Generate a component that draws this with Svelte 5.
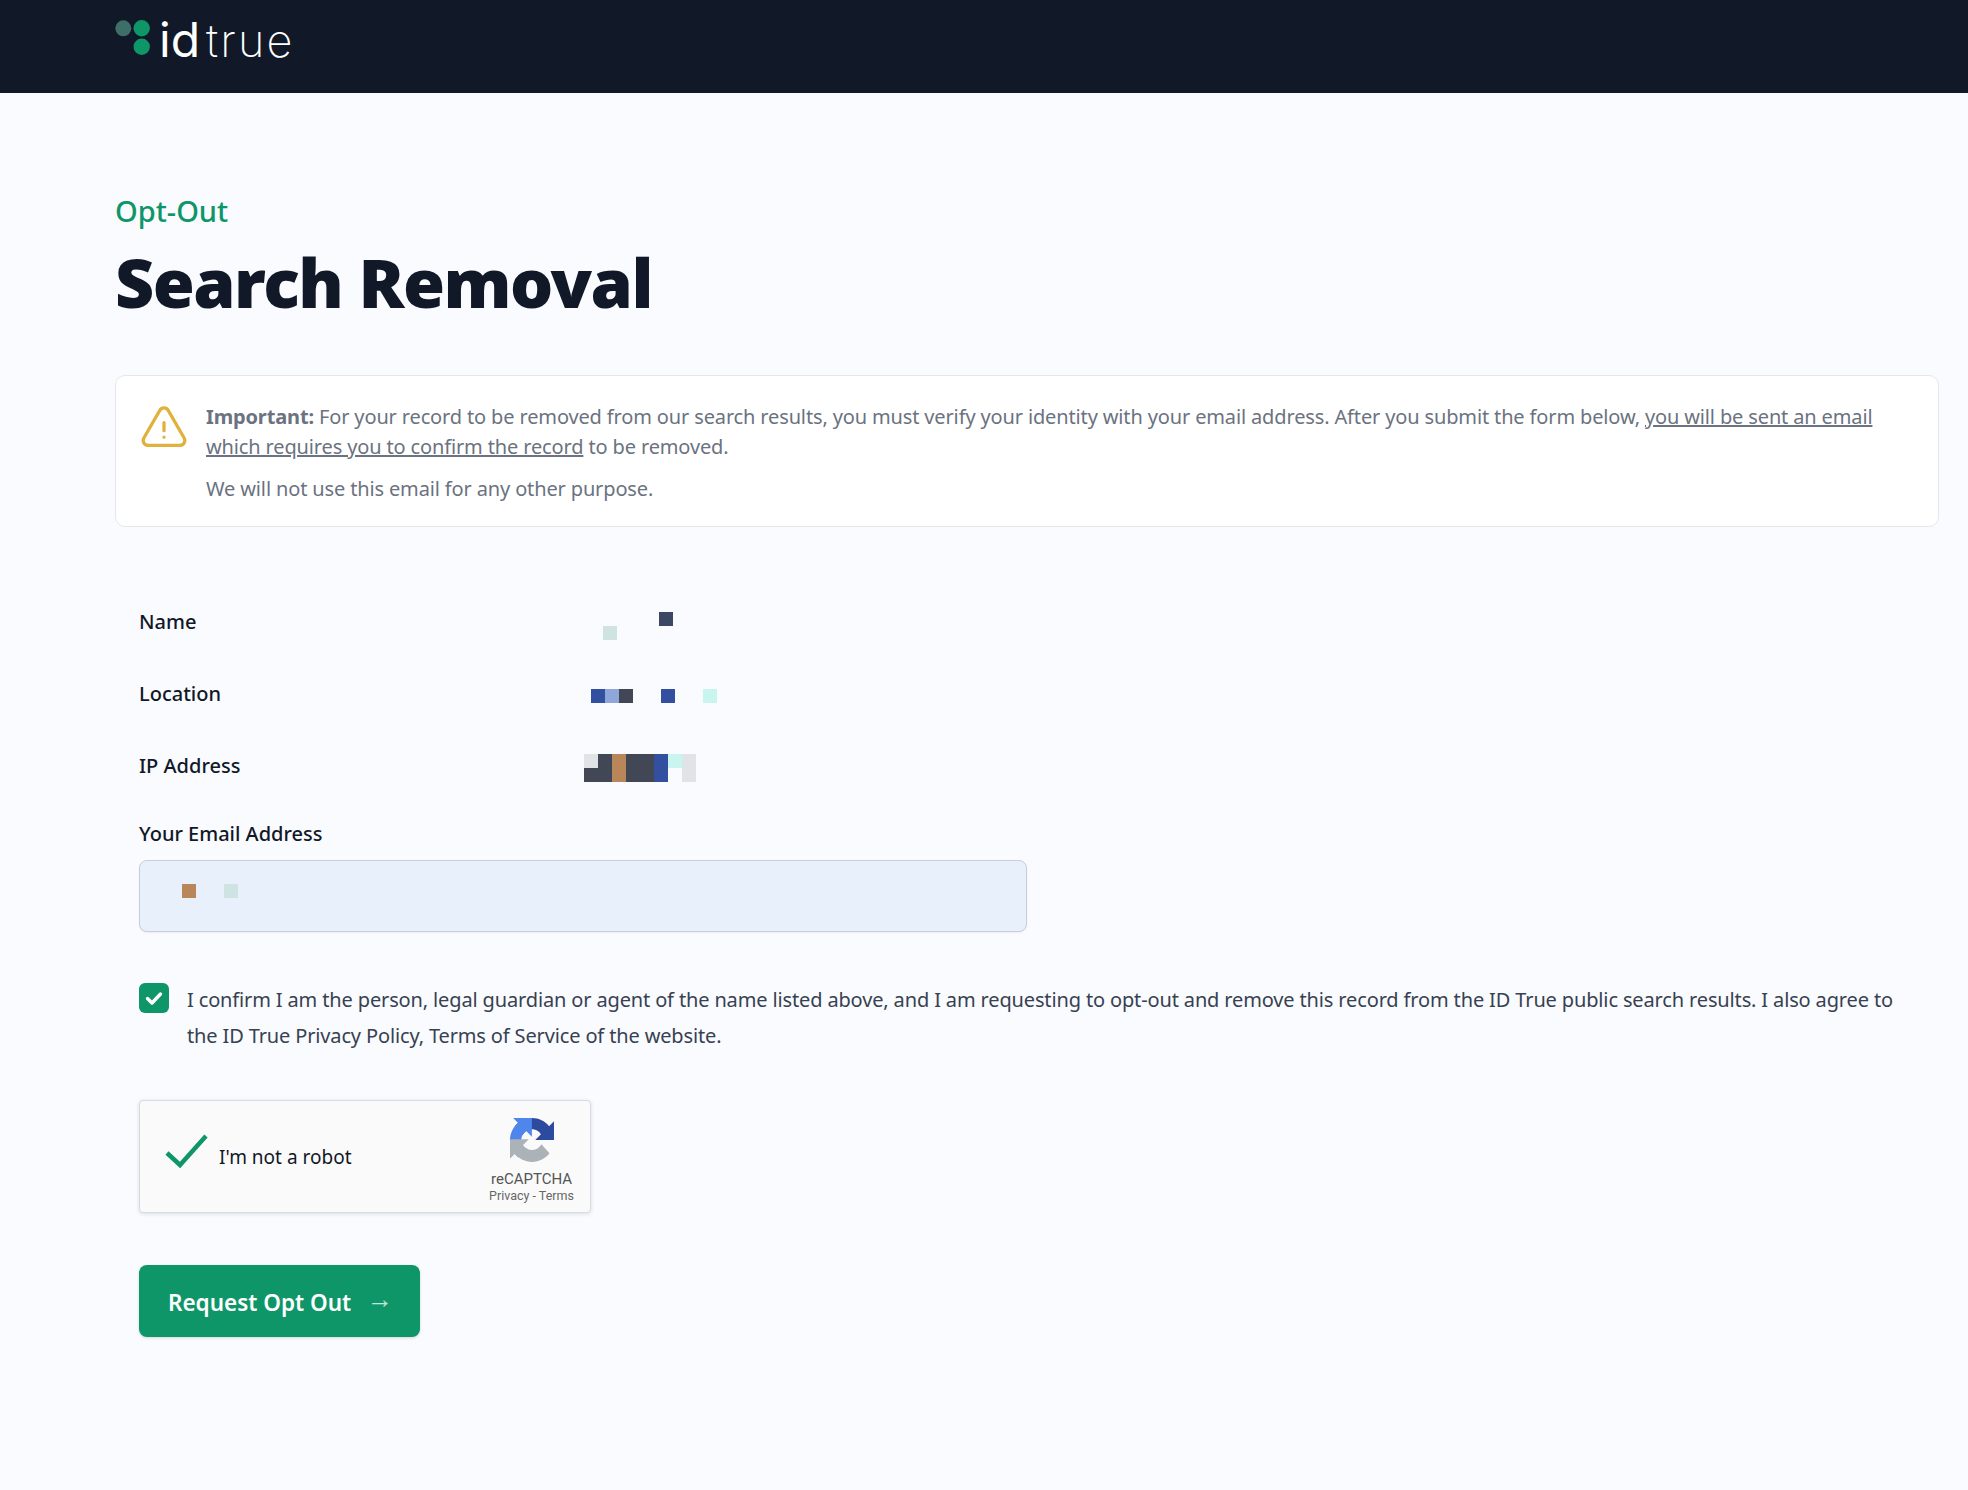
<script>
  const blue = '#32509f', dark = '#414754', orange = '#b88658', teal = '#c8f5ef', pale = '#cfe3e2', grey = '#e0e4e6'

  // redaction blocks: x, y, w, h, colour
  const fields = [
    { label: 'Name', cells: [[75, 5, 14, 14, '#3b4763'], [19, 19, 14, 14, pale]] },
    { label: 'Location', cells: [[7, 10, 14, 14, blue], [21, 10, 14, 14, '#8ea6d8'], [35, 10, 14, 14, dark], [77, 10, 14, 14, blue], [119, 10, 14, 14, teal]] },
    { label: 'IP Address', cells: [
      [0, 3, 14, 14, grey], [0, 17, 14, 14, dark], [14, 3, 14, 28, dark], [28, 3, 14, 28, orange],
      [42, 3, 28, 28, dark], [70, 3, 14, 28, blue], [84, 3, 14, 14, teal], [98, 3, 14, 28, grey]
    ] }
  ]
</script>

<header class="topbar">
  <a class="logo" href="/">
    <svg width="40" height="40" viewBox="0 0 40 40">
      <circle cx="8.3" cy="9.3" r="8" fill="#3d6e68" />
      <circle cx="26.7" cy="9.3" r="8.2" fill="#0e9669" />
      <circle cx="26.7" cy="27.7" r="8.2" fill="#0e9669" />
    </svg>
    <span class="logo-text"><b>id</b>true</span>
  </a>
</header>

<main class="page">
  <p class="eyebrow">Opt-Out</p>
  <h1>Search Removal</h1>

  <section class="notice">
    <svg class="warn" width="52" height="52" viewBox="0 0 24 24" fill="none" stroke="#e0b23c" stroke-width="1.5" stroke-linecap="round" stroke-linejoin="round">
      <path d="M12 9v3.75m-9.303 3.376c-.866 1.5.217 3.374 1.948 3.374h14.71c1.73 0 2.813-1.874 1.948-3.374L13.949 3.378c-.866-1.5-3.032-1.5-3.898 0L2.697 16.126zM12 15.75h.007v.008H12v-.008z" />
    </svg>
    <div class="notice-body">
      <p><strong>Important:</strong> For your record to be removed from our search results, you must verify your identity with your email address. After you submit the form below, <u>you will be sent an email which requires you to confirm the record</u> to be removed.</p>
      <p>We will not use this email for any other purpose.</p>
    </div>
  </section>

  <form class="form" on:submit|preventDefault>
    <div class="rows">
      {#each fields as f}
        <div class="field-row">
          <span class="label">{f.label}</span>
          <svg class="redacted" width="140" height="36">
            {#each f.cells as c}
              <rect x={c[0]} y={c[1]} width={c[2]} height={c[3]} fill={c[4]} />
            {/each}
          </svg>
        </div>
      {/each}
    </div>

    <label class="label email-label" for="email">Your Email Address</label>
    <div class="email-input" id="email">
      <svg class="redacted" width="56" height="14">
        <rect x="0" y="0" width="14" height="14" fill={orange} />
        <rect x="42" y="0" width="14" height="14" fill={pale} />
      </svg>
    </div>

    <div class="confirm">
      <span class="checkbox">
        <svg width="20" height="20" viewBox="0 0 20 20" fill="none" stroke="#fff" stroke-width="3.4" stroke-linecap="round" stroke-linejoin="round">
          <path d="M3.5 10.5l4.5 4.5 8.5-9" />
        </svg>
      </span>
      <p>I confirm I am the person, legal guardian or agent of the name listed above, and I am requesting to opt-out and remove this record from the ID True public search results. I also agree to the ID True Privacy Policy, Terms of Service of the website.</p>
    </div>

    <div class="captcha">
      <svg class="tick" width="44" height="36" viewBox="0 0 44 36" fill="none" stroke="#0e9669" stroke-width="4.5">
        <path d="M2 20l13 12L41 3" />
      </svg>
      <span class="robot">I'm not a robot</span>
      <div class="brand">
        <svg width="44" height="44" viewBox="0 0 64 64">
          <path d="M64 31.955l-.033-1.37V4.687l-7.16 7.16C50.948 4.674 42.033.093 32.05.093c-10.4 0-19.622 4.96-25.458 12.64l11.736 11.86a15.55 15.55 0 0 1 4.754-5.334c2.05-1.6 4.952-2.906 8.968-2.906.485 0 .86.057 1.135.163 4.976.393 9.288 3.14 11.828 7.124l-8.307 8.307 26.295.008" fill="#2c4a9e" />
          <path d="M31.862.001l-1.37.033H4.593l7.16 7.16C4.58 13.054 0 21.97 0 31.953c0 10.4 4.96 19.622 12.64 25.458l11.86-11.736a15.55 15.55 0 0 1-5.334-4.754c-1.6-2.05-2.906-4.952-2.906-8.968 0-.485.057-.86.163-1.135.393-4.976 3.14-9.288 7.124-11.828l8.307 8.307.008-26.295" fill="#4f86ec" />
          <path d="M.001 31.955l.033 1.37v25.9l7.16-7.16c5.86 7.173 14.775 11.754 24.76 11.754 10.4 0 19.622-4.96 25.458-12.64L45.676 38.32a15.55 15.55 0 0 1-4.754 5.334c-2.05 1.6-4.952 2.906-8.968 2.906-.485 0-.86-.057-1.135-.163-4.976-.393-9.288-3.14-11.828-7.124l8.307-8.307-26.295-.008" fill="#abb2b8" />
        </svg>
        <span class="brand-name">reCAPTCHA</span>
        <span class="brand-links">Privacy - Terms</span>
      </div>
    </div>

    <button class="submit" type="submit">Request Opt Out <span class="arrow">→</span></button>
  </form>
</main>

<style>
  :global(body) {
    background: #f9fbfe;
    font-family: "Noto Sans", "Open Sans", sans-serif;
    color: #111827;
  }
  * {
    box-sizing: border-box;
  }
  p, h1 {
    margin: 0;
  }
  .topbar {
    height: 93px;
    background: #111827;
    padding: 19px 0 0 115px;
  }
  .logo {
    display: flex;
    gap: 4px;
    text-decoration: none;
    height: 40px;
  }
  .logo-text {
    font-family: "Inter", sans-serif;
    font-size: 45px;
    line-height: 42px;
    font-weight: 200;
    letter-spacing: 2.2px;
    color: #fff;
  }
  .logo-text b {
    font-size: 48px;
    font-weight: 400;
    letter-spacing: 0;
    margin-right: 6px;
  }
  .page {
    padding: 99px 29px 0 115px;
    height: 1397px;
  }
  .eyebrow {
    font-size: 29px;
    line-height: 37px;
    font-weight: 500;
    color: #0e9669;
  }
  h1 {
    font-size: 68px;
    line-height: 80px;
    font-weight: 900;
    margin-top: 13px;
    letter-spacing: -1.5px;
  }
  .notice {
    display: flex;
    margin-top: 53px;
    height: 152px;
    padding: 26px 40px 0 22px;
    gap: 16px;
    background: #fff;
    border: 1px solid #e5e7eb;
    border-radius: 10px;
    color: #6b7280;
    font-size: 20px;
    line-height: 30px;
    letter-spacing: -0.14px;
  }
  .warn {
    flex: none;
    margin-top: 1px;
  }
  .notice-body p + p {
    margin-top: 12px;
  }
  .form {
    padding: 80px 24px 0;
    font-size: 20px;
  }
  .rows {
    display: flex;
    flex-direction: column;
    gap: 8px;
  }
  .field-row {
    display: grid;
    grid-template-columns: 445px 1fr;
    height: 64px;
  }
  .label {
    font-weight: 500;
    line-height: 30px;
  }
  .email-label {
    display: block;
    margin-top: 4px;
  }
  .redacted {
    display: block;
  }
  .email-input {
    width: 888px;
    height: 72px;
    margin-top: 11px;
    padding: 23px 0 0 42px;
    background: #e8f0fb;
    border: 1px solid #c9ced8;
    border-radius: 8px;
    box-shadow: 0 1px 2px rgba(0, 0, 0, 0.06);
  }
  .confirm {
    display: flex;
    gap: 18px;
    margin-top: 51px;
    color: #374151;
    line-height: 36px;
    letter-spacing: -0.14px;
  }
  .confirm p {
    margin-top: -1px;
  }
  .checkbox {
    flex: none;
    width: 30px;
    height: 30px;
    border-radius: 6px;
    background: #0e9669;
    display: flex;
    align-items: center;
    justify-content: center;
  }
  .captcha {
    display: flex;
    align-items: center;
    width: 452px;
    height: 113px;
    margin-top: 46px;
    padding: 0 16px 0 25px;
    background: #fafafa;
    border: 1px solid #d6dae2;
    border-radius: 4px;
    box-shadow: 0 1px 4px rgba(0, 0, 0, 0.12);
  }
  .tick {
    margin-bottom: 12px;
  }
  .robot {
    margin-left: 10px;
    font-size: 19px;
  }
  .brand {
    margin-left: auto;
    align-self: flex-start;
    padding-top: 17px;
    display: flex;
    flex-direction: column;
    align-items: center;
    font-family: "Roboto", sans-serif;
    color: #555;
  }
  .brand-name {
    font-size: 15px;
    line-height: 18px;
    margin-top: 8px;
  }
  .brand-links {
    font-size: 12.5px;
    line-height: 16px;
    color: #666;
  }
  .submit {
    display: block;
    margin-top: 52px;
    padding-left: 8px;
    width: 281px;
    height: 72px;
    border: 0;
    border-radius: 8px;
    background: #0e9669;
    color: #fff;
    font: inherit;
    font-weight: 600;
    font-size: 22.5px;
    box-shadow: 0 1px 3px rgba(0, 0, 0, 0.15);
  }
  .arrow {
    margin-left: 10px;
    font-weight: 300;
    font-size: 26px;
    opacity: 0.75;
    position: relative;
    top: -3px;
  }
</style>
